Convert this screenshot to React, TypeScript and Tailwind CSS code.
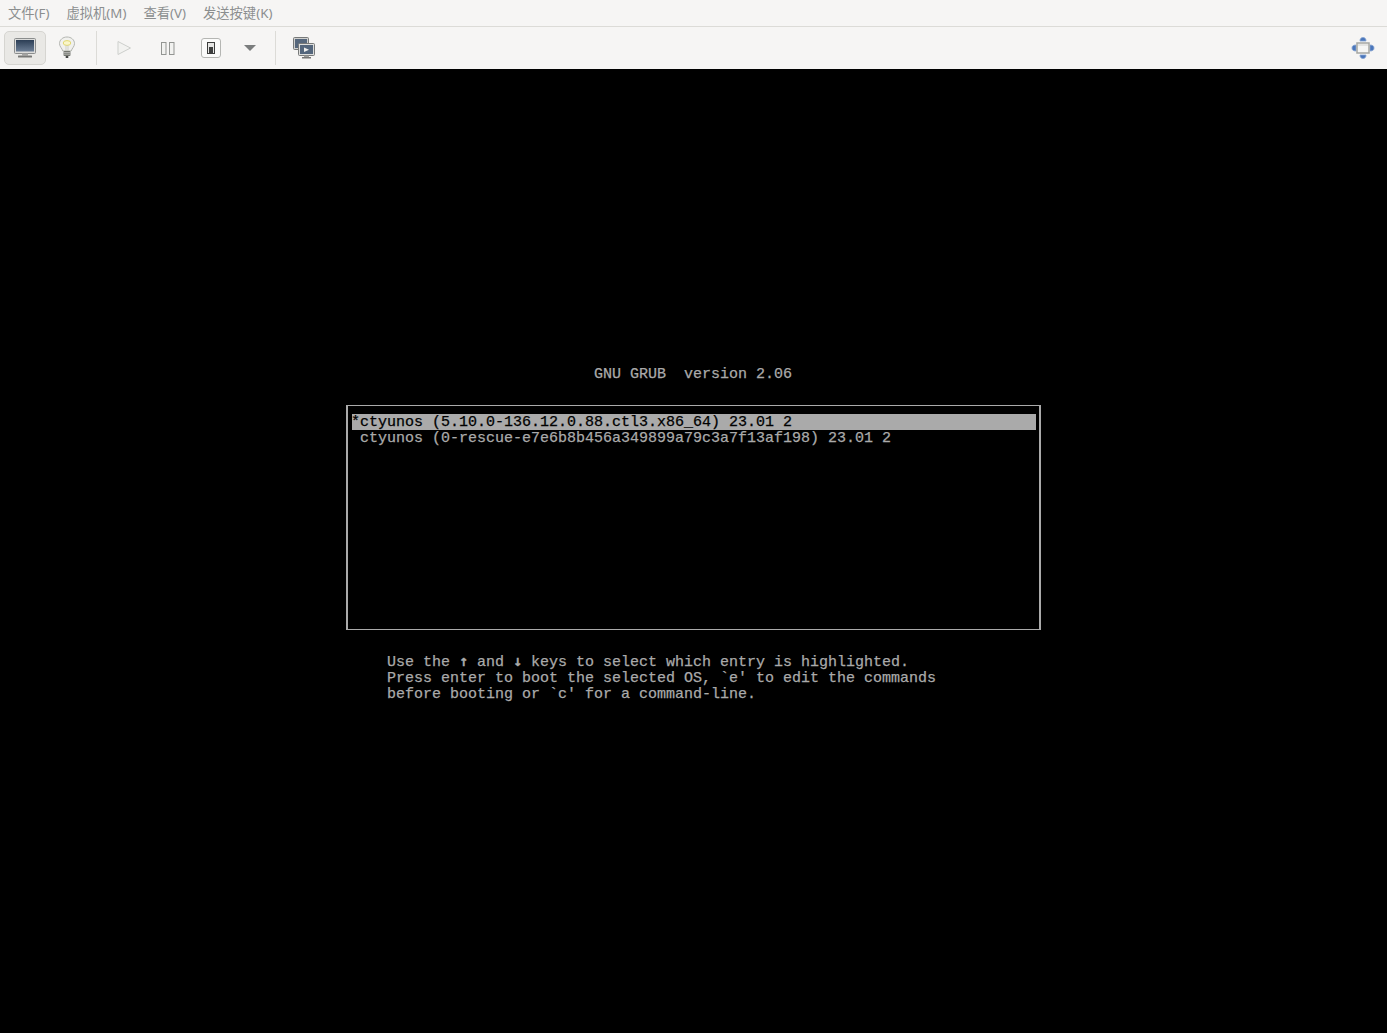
import React from 'react';

const uiFont = "font-['Noto_Sans','Noto_Sans_CJK_SC',sans-serif]";

const menus = ['文件(F)', '虚拟机(M)', '查看(V)', '发送按键(K)'];

const MonitorIcon = () => (
    <svg width="24" height="22" viewBox="0 0 24 22">
        <defs>
            <linearGradient id="scr" x1="0" y1="0" x2="0" y2="1">
                <stop offset="0" stopColor="#2c3e55" />
                <stop offset="1" stopColor="#6b7d94" />
            </linearGradient>
        </defs>
        <rect x="1.500" y="1.500" width="21" height="15" rx="1" fill="#dcdcda" stroke="#8b8d8d" />
        <rect x="3" y="3" width="18" height="11.500" fill="url(#scr)" />
        <rect x="9" y="16.500" width="6" height="2" fill="#a5a5a3" />
        <rect x="5" y="18.500" width="14" height="2" rx="0.500" fill="#787876" />
    </svg>
);

const BulbIcon = () => (
    <svg width="18" height="24" viewBox="0 0 18 24">
        <path d="M9 1c4.200 0 7.500 2.800 7.500 6.600 0 3-2.500 4.600-3.300 7.400H4.800C4 12.200 1.500 10.600 1.500 7.600 1.500 3.800 4.800 1 9 1z" fill="#f1f1ee" stroke="#b4b6b1" />
        <ellipse cx="9" cy="7" rx="3.800" ry="2.400" fill="#faf6c8" stroke="#e2d870" />
        <path d="M8 9.400V15M10 9.400V15" stroke="#c2c2b6" strokeWidth="0.700" />
        <rect x="5.500" y="15" width="7" height="5" rx="1" fill="#74766f" />
        <path d="M5.500 16.600h7M5.500 18.200h7" stroke="#d0d0ce" strokeWidth="0.700" />
        <rect x="7.500" y="20" width="3" height="2" rx="1" fill="#3c3d3c" />
    </svg>
);

const PlayIcon = () => (
    <svg width="16" height="16" viewBox="0 0 16 16">
        <path d="M2 1.500 14.500 8 2 14.500z" fill="#f2f2f0" stroke="#cdcfcc" />
    </svg>
);

const PauseIcon = () => (
    <svg width="14" height="13" viewBox="0 0 14 13">
        <rect x="0.500" y="0.500" width="4.500" height="12" fill="#f2f2f0" stroke="#939592" />
        <rect x="8.500" y="0.500" width="4.500" height="12" fill="#f2f2f0" stroke="#939592" />
    </svg>
);

const PowerIcon = () => (
    <svg width="20" height="20" viewBox="0 0 20 20">
        <rect x="0.500" y="0.500" width="19" height="19" rx="2.500" fill="#fbfbfa" stroke="#b5b6b3" />
        <rect x="6.500" y="4.500" width="7" height="11" fill="#e6e6e4" stroke="#3d3e3d" />
        <rect x="8" y="9" width="4" height="6" fill="#3d3e3d" />
    </svg>
);

const SnapshotIcon = () => (
    <svg width="22" height="22" viewBox="0 0 22 22">
        <rect x="0.500" y="0.500" width="15" height="12" rx="1" fill="#d0d0ce" stroke="#777979" />
        <rect x="2" y="2" width="12" height="9" fill="#56677c" />
        <rect x="5.500" y="6.500" width="16" height="12" rx="1" fill="#dededc" stroke="#777979" />
        <rect x="7" y="8" width="13" height="9" fill="#54667c" />
        <path d="M11 10.500v4.500l5-2.200z" fill="#eeeeec" />
        <rect x="11" y="18.500" width="5" height="1.500" fill="#9b9b99" />
        <rect x="9" y="20" width="9" height="1.500" fill="#767674" />
    </svg>
);

const ResizeIcon = () => (
    <svg width="24" height="24" viewBox="0 0 24 24">
        <g fill="#4a76bb" stroke="#86a3d1" strokeWidth="0.800">
            <path d="M12 1.500c2 0 3 1.200 3 3.500H9c0-2.300 1-3.500 3-3.500z" />
            <path d="M12 22.500c2 0 3-1.200 3-3.500H9c0 2.300 1 3.500 3 3.500z" />
            <path d="M1 12c0-2 1.200-3 4-3v6c-2.800 0-4-1-4-3z" />
            <path d="M23 12c0-2-1.200-3-4-3v6c2.800 0 4-1 4-3z" />
        </g>
        <rect x="6" y="7" width="12" height="10" fill="#f6f6f4" stroke="#a5a6a3" strokeWidth="1.500" />
        <path d="M7 9h10" stroke="#d2d2cf" />
    </svg>
);

const ArrowDownIcon = () => (
    <svg width="14" height="8" viewBox="0 0 14 8">
        <path d="M1 1h12L7 7z" fill="#7b7d7d" />
    </svg>
);

const ToolButton = ({ children, active, className = 'w-[42px]' }: { children: React.ReactNode; active?: boolean; className?: string }) => (
    <div className={`flex h-[34px] items-center justify-center rounded-[5px] border ${className} ${active ? 'border-[#d6d5d1] bg-[#e9e8e5]' : 'border-transparent'}`}>
        {children}
    </div>
);

const Separator = ({ className }: { className: string }) => <div className={`mr-[7px] h-[34px] w-px bg-[#dcdbd7] ${className}`} />;

const Arrow = ({ children }: { children: string }) => (
    <span className="inline-block w-[9px] text-center font-['DejaVu_Sans_Mono',monospace] font-bold">{children}</span>
);

const GrubScreen = () => (
    <div className="flex-auto bg-black font-['Liberation_Mono',monospace] text-[15px] leading-[16px] text-[#aaaaaa] whitespace-pre [-webkit-text-stroke:0.25px]">
        <div className="pt-[296px] pl-[594px] leading-[20px]">GNU GRUB  version 2.06</div>
        <div className="mx-auto mt-[20px] h-[225px] w-[695px] border-x-2 border-y border-[#aaaaaa] pt-2 pl-1 pr-[3px] leading-[18px]">
            <div className="h-4 bg-[#aaaaaa] indent-[-1px] text-black">*ctyunos (5.10.0-136.12.0.88.ctl3.x86_64) 23.01 2</div>
            <div className="h-4 indent-[-1px]"> ctyunos (0-rescue-e7e6b8b456a349899a79c3a7f13af198) 23.01 2</div>
        </div>
        <div className="mt-[23px] pl-[387px]">
            <div>Use the <Arrow>↑</Arrow> and <Arrow>↓</Arrow> keys to select which entry is highlighted.</div>
            <div>Press enter to boot the selected OS, `e' to edit the commands</div>
            <div>before booting or `c' for a command-line.</div>
        </div>
    </div>
);

const App: React.FC = () => {
    return (
        <div className={`flex h-[1033px] w-[1387px] flex-col overflow-hidden bg-[#f6f5f4] ${uiFont}`}>
            <div className="flex h-[27px] flex-none items-center gap-[17px] border-b border-[#dcdbd7] pt-px pl-2 text-[13.3px] text-[#8b8e8f]">
                {menus.map((m) => (
                    <span key={m}>{m}</span>
                ))}
            </div>
            <div className="flex h-[42px] flex-none items-center pl-1 pr-[12px]">
                <ToolButton active><MonitorIcon /></ToolButton>
                <ToolButton><BulbIcon /></ToolButton>
                <Separator className="ml-2" />
                <ToolButton className="w-[40px]"><PlayIcon /></ToolButton>
                <ToolButton className="w-[48px]"><PauseIcon /></ToolButton>
                <ToolButton className="w-[38px]"><PowerIcon /></ToolButton>
                <ToolButton className="w-[40px]"><ArrowDownIcon /></ToolButton>
                <Separator className="ml-[5px]" />
                <ToolButton><SnapshotIcon /></ToolButton>
                <div className="ml-auto"><ResizeIcon /></div>
            </div>
            <GrubScreen />
        </div>
    );
};

export default App;
